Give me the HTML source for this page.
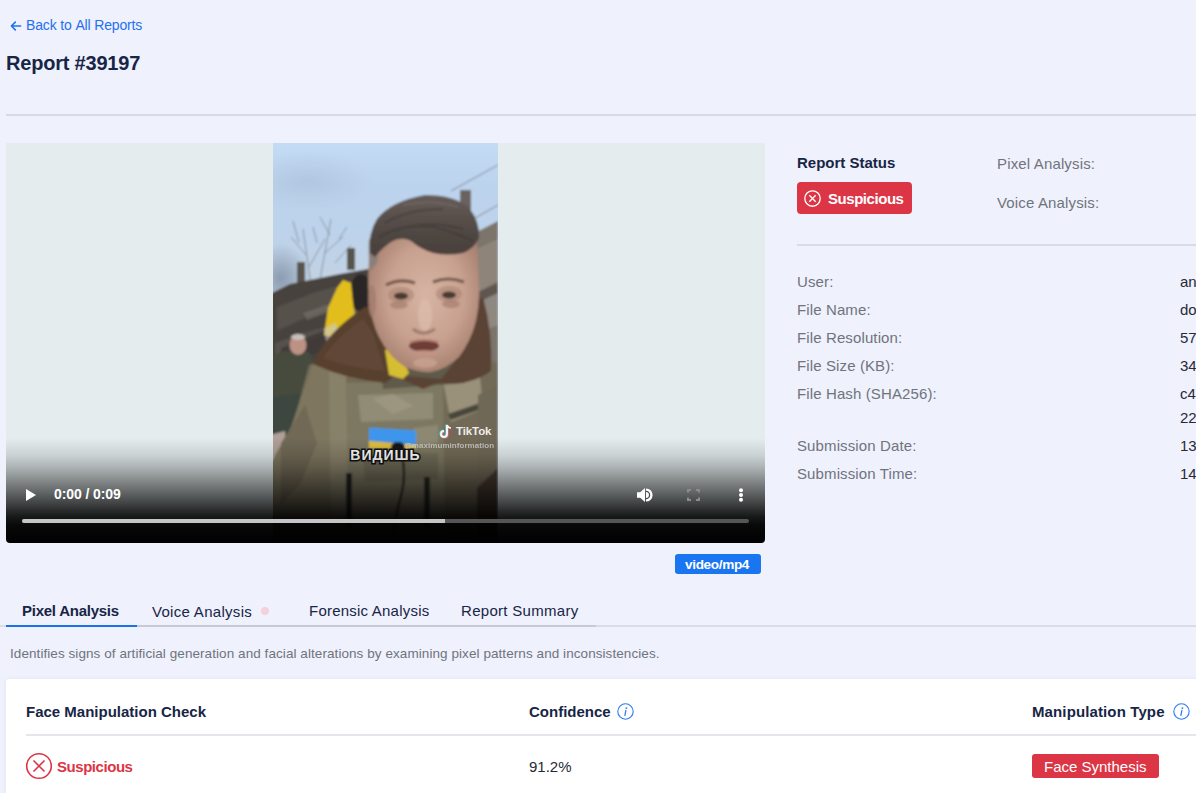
<!DOCTYPE html>
<html><head><meta charset="utf-8">
<style>
html,body{margin:0;padding:0}
body{width:1196px;height:793px;overflow:hidden;position:relative;background:#eff1fc;font-family:"Liberation Sans",sans-serif}
.t{position:absolute;white-space:nowrap;line-height:1}
.navy{color:#172546}
.grey{color:#6f747c;letter-spacing:0.12px}
.dark{color:#262a35}
.b{font-weight:700}
</style></head><body>

<!-- header -->
<div class="t" style="left:10px;top:18px;font-size:14px;color:#1f70f2">
  <svg width="13" height="14" viewBox="0 0 13 14" style="position:absolute;left:0;top:1px"><path d="M10.6 7H1.8M5.3 3.1L1.4 7 5.3 10.9" fill="none" stroke="#1f70f2" stroke-width="1.6" stroke-linecap="round" stroke-linejoin="round"/></svg>
  <span style="position:absolute;left:16px;top:0;letter-spacing:-0.15px">Back&nbsp;to&nbsp;All&nbsp;Reports</span>
</div>
<div class="t navy b" style="left:6px;top:52.8px;font-size:20px;letter-spacing:-0.2px">Report #39197</div>
<div style="position:absolute;left:6px;top:114px;width:1190px;height:2px;background:#d8dae6"></div>

<!-- video -->
<div id="video" style="position:absolute;left:6px;top:143px;width:759px;height:400px;border-radius:0 0 4px 4px;overflow:hidden;background:#e4ecee">
<svg width="225" height="400" viewBox="0 0 225 400" style="position:absolute;left:267px;top:0">
<defs>
<linearGradient id="sky" x1="0" y1="0" x2="0" y2="1">
<stop offset="0" stop-color="#c4dcf6"/><stop offset="0.12" stop-color="#bcd3ee"/><stop offset="0.25" stop-color="#bed3ea"/><stop offset="0.36" stop-color="#c3d2e2"/><stop offset="0.5" stop-color="#b8c4d2"/>
</linearGradient>
<radialGradient id="cloud" cx="0.5" cy="0.5" r="0.5"><stop offset="0" stop-color="#a8bcd4" stop-opacity="0.55"/><stop offset="1" stop-color="#aebcce" stop-opacity="0"/></radialGradient>
<radialGradient id="smoke" cx="0.5" cy="0.5" r="0.5"><stop offset="0" stop-color="#8595ab" stop-opacity="0.9"/><stop offset="1" stop-color="#8595ab" stop-opacity="0"/></radialGradient>
<radialGradient id="faceg" cx="0.52" cy="0.45" r="0.62"><stop offset="0" stop-color="#d6b4a4"/><stop offset="0.55" stop-color="#c8a190"/><stop offset="1" stop-color="#9e7868"/></radialGradient>
<linearGradient id="hairg" x1="0" y1="0" x2="0" y2="1"><stop offset="0" stop-color="#665c58"/><stop offset="0.65" stop-color="#4e4642"/><stop offset="1" stop-color="#4a403c"/></linearGradient>
<filter id="bl" x="-5%" y="-5%" width="110%" height="110%"><feGaussianBlur stdDeviation="1.3"/></filter>
</defs>
<g filter="url(#bl)">
<rect x="-5" y="-5" width="235" height="410" fill="url(#sky)"/>
<ellipse cx="35" cy="38" rx="65" ry="30" fill="url(#cloud)"/>
<ellipse cx="8" cy="135" rx="30" ry="35" fill="url(#smoke)"/>
<!-- trees -->
<g stroke="#5e6a78" stroke-width="0.9" fill="none" opacity="0.7">
<path d="M38 142L30 86M33 112L18 94M36 124L52 96M46 142L58 76M52 110L70 94M57 92L47 74M26 100L20 78M62 120L78 102M44 100L40 84M66 96L74 84"/>
</g>
<!-- poles -->
<rect x="24" y="119" width="8" height="25" fill="#58524c"/>
<rect x="74" y="105" width="8" height="22" fill="#58524c"/>
<rect x="187" y="47" width="11" height="45" fill="#6a625e"/>
<path d="M178 48L225 22M190 82L225 62" stroke="#6a6a72" stroke-width="0.8"/>
<!-- trench wall -->
<path d="M-5 152L17 141L67 131L95 126L122 124L122 280L-5 280Z" fill="#46423e"/>
<path d="M160 160L225 150L225 260L160 260Z" fill="#5a5448"/>
<path d="M4 164L40 150L88 136L98 146L70 160L30 176L4 188Z" fill="#5a5550" opacity="0.8"/>
<path d="M2 200L30 190L60 182L58 190L30 200L2 212Z" fill="#5e5852" opacity="0.7"/>
<path d="M70 170L95 160L98 168L72 178Z" fill="#8a847a" opacity="0.5"/>
<path d="M8 205L50 188L88 172L95 192L50 208L8 222Z" fill="#3e3a38" opacity="0.9"/>
<path d="M30 170L60 160L64 166L34 177Z" fill="#7a746c" opacity="0.6"/>
<!-- right sandbags -->
<path d="M198 92L225 78L225 250L200 250Z" fill="#7c746c"/>
<path d="M203 106L225 96L225 138L203 150Z" fill="#8e847a"/>
<path d="M203 150L225 140L225 160L204 168Z" fill="#5e5650"/>
<path d="M203 160L225 150L225 182L205 190Z" fill="#8e8880"/>
<!-- dark head behind -->
<ellipse cx="88" cy="150" rx="11" ry="19" fill="#2a2826"/>
<!-- yellow jacket -->
<path d="M51 192L55 165L64 145L70 137L78 140L80 160L84 185L72 198Z" fill="#e2be1e"/>
<path d="M51 186L62 180L70 194L53 198Z" fill="#c8ccd0" opacity="0.6"/>
<!-- older man -->
<path d="M-5 214L12 208L36 209L44 228L42 300L-5 305Z" fill="#464b3c"/>
<ellipse cx="25" cy="202" rx="8.5" ry="10" fill="#bb9284"/>
<ellipse cx="25" cy="194" rx="7" ry="3" fill="#c8c0ba"/>
<path d="M-5 255L28 250L38 298L-5 305Z" fill="#3c4640"/>
<path d="M-3 292L12 288L14 312L-3 314Z" fill="#b0a098"/>
<!-- body / vest base -->
<path d="M-5 400L-5 325L20 282L36 222L70 214L140 226L205 214L225 220L225 400Z" fill="#726b57"/>
<!-- left sleeve -->
<path d="M-5 400L-5 325L18 284L40 220L58 226L60 400Z" fill="#7e765f"/>
<path d="M8 300L32 262L44 300L28 340L8 362Z" fill="#6e6654" opacity="0.8"/>
<!-- left strap -->
<path d="M56 228L73 233L77 400L58 400Z" fill="#88816b"/>
<!-- chest plate -->
<path d="M73 240L170 237L172 400L76 400Z" fill="#7d7862"/>
<path d="M85 252L160 250L160 276L88 279Z" fill="#948f7a" opacity="0.85"/>
<path d="M90 312L165 310L165 336L92 339Z" fill="#6e6956" opacity="0.8"/>
<path d="M100 256L120 251L140 263L120 271Z" fill="#a39d88" opacity="0.6"/>
<path d="M140 285L165 282L165 300L142 303Z" fill="#98927c" opacity="0.6"/>
<!-- right strap -->
<path d="M168 228L205 214L210 266L178 279Z" fill="#99917a"/>
<path d="M175 271L210 259L211 265L178 277Z" fill="#4a463a"/>
<!-- right side -->
<path d="M205 252L225 242L225 400L204 400Z" fill="#706856"/>
<path d="M204 345L225 325L225 400L204 400Z" fill="#4a3a30"/>
<!-- dark sticks / cable -->
<rect x="73" y="330" width="6" height="55" fill="#232220"/>
<rect x="151" y="334" width="6" height="50" fill="#262522"/>
<path d="M126 304Q136 330 126 360L119 395" stroke="#141414" stroke-width="2.2" fill="none"/>
<!-- neck -->
<path d="M105 198L150 218L178 198L192 240L110 246Z" fill="#5e5a4a"/>
<!-- fur collar -->
<path d="M40 221Q52 190 92 164L104 168Q116 196 126 230L112 240Q72 236 40 221Z" fill="#58402f"/>
<path d="M50 215Q62 195 90 176L100 190Q106 210 112 228Q80 226 50 215Z" fill="#644a3c" opacity="0.7"/>
<path d="M202 160L210 154Q220 190 218 228Q196 244 164 240Q192 214 202 160Z" fill="#5a4236"/>
<path d="M120 232L168 236L190 230L150 246Z" fill="#5a4236"/>
<!-- yellow collar -->
<path d="M112 207L124 204L136 230L130 236L116 232Z" fill="#d6be30"/>
<!-- face -->
<path d="M97 100Q94 140 96 155Q98 178 106 194Q116 214 132 224Q146 230 158 229Q174 226 186 214Q198 198 203 178Q207 160 206 143L204 96Q150 80 97 100Z" fill="url(#faceg)"/>
<ellipse cx="99" cy="158" rx="4" ry="16" fill="#a47c6e" opacity="0.8"/>
<!-- eyes & brows -->
<ellipse cx="128" cy="152" rx="13" ry="8" fill="#a8806f" opacity="0.55"/>
<ellipse cx="176" cy="151" rx="13" ry="8" fill="#a8806f" opacity="0.55"/>
<path d="M113 142Q127 135 142 140" stroke="#7a5a4e" stroke-width="3.2" fill="none"/>
<path d="M160 139Q175 133 191 139" stroke="#7a5a4e" stroke-width="3.2" fill="none"/>
<ellipse cx="128" cy="153" rx="7" ry="3.4" fill="#4a3a32"/>
<ellipse cx="176" cy="152" rx="7" ry="3.4" fill="#4a3a32"/>
<ellipse cx="126" cy="162" rx="9" ry="4" fill="#a07868" opacity="0.6"/>
<ellipse cx="178" cy="161" rx="9" ry="4" fill="#a07868" opacity="0.6"/>
<!-- nose -->
<ellipse cx="152" cy="172" rx="7" ry="16" fill="#dcbcac" opacity="0.75"/>
<path d="M140 186Q150 194 162 186" stroke="#94705f" stroke-width="3" fill="none" opacity="0.8"/>
<!-- mouth -->
<ellipse cx="151" cy="203" rx="15" ry="5.5" fill="#6e3e38"/>
<path d="M137 199Q151 195 165 199" stroke="#b48070" stroke-width="2" fill="none"/>
<ellipse cx="151" cy="210" rx="12" ry="3" fill="#c49484" opacity="0.8"/>
<ellipse cx="152" cy="220" rx="12" ry="5" fill="#d0aa9a" opacity="0.6"/>
<!-- hair -->
<path d="M96 96Q95 112 97 128L104 120Q106 106 104 94Z" fill="#8c7e78"/>
<path d="M97 110Q95 90 104 76Q118 58 152 52Q182 52 196 65Q207 78 206 95Q201 106 190 110Q175 113 160 110Q147 106 138 98Q128 93 118 99Q108 106 102 114Z" fill="url(#hairg)"/>
<path d="M112 80Q135 66 170 66M106 94Q130 80 160 84Q180 88 200 98M122 88Q150 76 190 86" stroke="#3e3634" stroke-width="2.2" fill="none" opacity="0.55"/>
<path d="M130 62Q160 56 185 64" stroke="#7a706c" stroke-width="2" fill="none" opacity="0.5"/>
<!-- flag -->
<path d="M96 284.5L143 287.5L143 302L96 298Z" fill="#3c96ec"/>
<path d="M96 298L143 302L143 305.5L96 305.5Z" fill="#e0c03a"/>
<ellipse cx="125" cy="304" rx="7" ry="5" fill="#141414"/>
</g>
<!-- overlay text -->
<text x="112.5" y="317" font-family="Liberation Sans" font-weight="700" font-size="14" fill="#fff" stroke="#141414" stroke-width="3.2" paint-order="stroke" text-anchor="middle" letter-spacing="1">ВИДИШЬ</text>
<g transform="translate(167,280)">
<path d="M7 2V11A3 3 0 1 1 4 8" stroke="#f05a80" stroke-width="2.4" fill="none" transform="translate(0.8,0.6)" opacity="0.8"/>
<path d="M7 2V11A3 3 0 1 1 4 8" stroke="#40e0e0" stroke-width="2.4" fill="none" transform="translate(-0.6,-0.4)" opacity="0.8"/>
<path d="M7 2V11A3 3 0 1 1 4 8" stroke="#f4f4f4" stroke-width="2" fill="none"/>
<path d="M7 2Q8 5 11 5" stroke="#f4f4f4" stroke-width="1.6" fill="none"/>
<text x="16" y="12" font-family="Liberation Sans" font-weight="700" font-size="11.5" fill="#ececec" letter-spacing="-0.1">TikTok</text>
</g>
<text x="131" y="304.8" font-family="Liberation Sans" font-weight="700" font-size="8" fill="#dcdcdc" opacity="0.75" letter-spacing="0.05">@maximuminformation</text>
</svg>
<div style="position:absolute;left:0;top:0;width:759px;height:400px;background:linear-gradient(to bottom, rgba(0,0,0,0) 0px, rgba(0,0,0,0) 295px, rgba(0,0,0,0.11) 312px, rgba(0,0,0,0.24) 324px, rgba(0,0,0,0.45) 340px, rgba(0,0,0,0.66) 356px, rgba(0,0,0,0.78) 365px, rgba(0,0,0,0.9) 374px, rgba(0,0,0,0.96) 382px, rgba(0,0,0,1) 400px)"></div>
<svg style="position:absolute;left:0;top:0" width="759" height="400" viewBox="0 0 759 400">
<path d="M20 346L30 352L20 358Z" fill="#fff"/>
<path d="M631 349.3H634.2L639 345V359L634.2 354.7H631Z" fill="#fff"/>
<path d="M640 345.4A6.6 6.6 0 0 1 640 358.6Z" fill="#fff"/>
<path d="M640 348.4A3.6 3.6 0 0 1 640 355.6" stroke="#4a4d4f" stroke-width="1.3" fill="none"/>
<path d="M682 349.5V347H685M690 347H693V349.5M693 354.5V357H690M685 357H682V354.5" stroke="#8c8c8c" stroke-width="2" fill="none"/>
<circle cx="735" cy="347.3" r="2" fill="#fff"/><circle cx="735" cy="352" r="2" fill="#fff"/><circle cx="735" cy="356.8" r="2" fill="#fff"/>
<rect x="16" y="376" width="727" height="4" rx="2" fill="#565656"/>
<rect x="16" y="376" width="423" height="4" rx="2" fill="#c6c6c6"/><rect x="434" y="376" width="5" height="4" fill="#c6c6c6"/>
</svg>
<div style="position:absolute;left:48px;top:344.1px;font-family:'Liberation Sans';font-weight:700;font-size:14px;line-height:14px;color:#fff;white-space:nowrap;letter-spacing:-0.1px">0:00 / 0:09</div>
</div>

<!-- right panel -->
<div class="t navy b" style="left:797px;top:155px;font-size:15px">Report Status</div>
<div style="position:absolute;left:797px;top:182px;width:115px;height:32px;border-radius:4px;background:#dc3545"></div>
<svg style="position:absolute;left:803px;top:189px" width="19" height="19" viewBox="0 0 19 19"><circle cx="9.5" cy="9.5" r="7.7" fill="none" stroke="#fff" stroke-width="1.35"/><path d="M6.3 6.3L12.7 12.7M12.7 6.3L6.3 12.7" stroke="#fff" stroke-width="1.35"/></svg>
<div class="t b" style="left:828px;top:191.3px;font-size:15px;color:#fff;letter-spacing:-0.45px">Suspicious</div>
<div class="t grey" style="left:997px;top:156px;font-size:15px;letter-spacing:0.15px">Pixel Analysis:</div>
<div class="t grey" style="left:997px;top:195px;font-size:15px;letter-spacing:0.15px">Voice Analysis:</div>
<div style="position:absolute;left:797px;top:244px;width:399px;height:2px;background:#d9dce8"></div>

<div class="t grey" style="left:797px;top:274px;font-size:15px">User:</div>
<div class="t grey" style="left:797px;top:302px;font-size:15px">File Name:</div>
<div class="t grey" style="left:797px;top:330px;font-size:15px">File Resolution:</div>
<div class="t grey" style="left:797px;top:358px;font-size:15px">File Size (KB):</div>
<div class="t grey" style="left:797px;top:386px;font-size:15px">File Hash (SHA256):</div>
<div class="t grey" style="left:797px;top:438px;font-size:15px">Submission Date:</div>
<div class="t grey" style="left:797px;top:466px;font-size:15px">Submission Time:</div>

<div class="t dark" style="left:1180px;top:274px;font-size:15px">anonymous</div>
<div class="t dark" style="left:1180px;top:302px;font-size:15px">download.mp4</div>
<div class="t dark" style="left:1180px;top:330px;font-size:15px">576x1024</div>
<div class="t dark" style="left:1180px;top:358px;font-size:15px">3412</div>
<div class="t dark" style="left:1180px;top:386px;font-size:15px">c4a1</div>
<div class="t dark" style="left:1180px;top:410px;font-size:15px">22ab</div>
<div class="t dark" style="left:1180px;top:438px;font-size:15px">13/03</div>
<div class="t dark" style="left:1180px;top:466px;font-size:15px">14:22</div>

<!-- mime badge -->
<div style="position:absolute;left:675px;top:554px;width:86px;height:20px;border-radius:3px;background:#1a75f0"></div>
<div class="t b" style="left:685px;top:557.6px;font-size:13.6px;color:#fff;letter-spacing:-0.35px">video/mp4</div>

<!-- tabs -->
<div style="position:absolute;left:0;top:625px;width:1196px;height:2px;background:#dadce8"></div>
<div style="position:absolute;left:6px;top:625px;width:590px;height:2px;background:#c6c9d7"></div>
<div style="position:absolute;left:6px;top:624.5px;width:130.5px;height:2.5px;background:#1a73e8"></div>
<div class="t navy b" style="left:22px;top:603px;font-size:15px;letter-spacing:-0.25px">Pixel Analysis</div>
<div class="t navy" style="left:152px;top:604px;font-size:15px;letter-spacing:0.3px">Voice Analysis</div>
<div style="position:absolute;left:261px;top:607px;width:8px;height:8px;border-radius:50%;background:#f2d2dc;filter:blur(0.4px)"></div>
<div class="t navy" style="left:309px;top:603px;font-size:15px;letter-spacing:0.22px">Forensic Analysis</div>
<div class="t navy" style="left:461px;top:603px;font-size:15px;letter-spacing:0.3px">Report Summary</div>

<div class="t grey" style="left:10px;top:646.6px;font-size:13.5px;letter-spacing:0.07px">Identifies signs of artificial generation and facial alterations by examining pixel patterns and inconsistencies.</div>

<!-- card -->
<div style="position:absolute;left:6px;top:679px;width:1200px;height:200px;border-radius:3px;background:#fff;box-shadow:0 0 5px rgba(80,90,160,0.07)"></div>
<div class="t navy b" style="left:26px;top:704px;font-size:15px">Face Manipulation Check</div>
<div class="t navy b" style="left:529px;top:704px;font-size:15px">Confidence</div>
<svg style="position:absolute;left:617px;top:703px" width="17" height="17" viewBox="0 0 17 17"><circle cx="8.5" cy="8.5" r="7.7" fill="none" stroke="#2b7bf3" stroke-width="1.1"/><circle cx="9.4" cy="5.1" r="0.95" fill="#2b7bf3"/><path d="M8.9 7.3L7.9 12.4" stroke="#2b7bf3" stroke-width="1.25" stroke-linecap="round"/></svg>
<div class="t navy b" style="left:1032px;top:704px;font-size:15px;letter-spacing:0.12px">Manipulation Type</div>
<svg style="position:absolute;left:1173px;top:703px" width="17" height="17" viewBox="0 0 17 17"><circle cx="8.5" cy="8.5" r="7.7" fill="none" stroke="#2b7bf3" stroke-width="1.1"/><circle cx="9.4" cy="5.1" r="0.95" fill="#2b7bf3"/><path d="M8.9 7.3L7.9 12.4" stroke="#2b7bf3" stroke-width="1.25" stroke-linecap="round"/></svg>
<div style="position:absolute;left:26px;top:734px;width:1170px;height:2px;background:#e4e6ec"></div>

<svg style="position:absolute;left:25px;top:752px" width="28" height="28" viewBox="0 0 28 28"><circle cx="14" cy="14" r="12.3" fill="none" stroke="#dc3545" stroke-width="1.6"/><path d="M8.5 8.5L19.5 19.5M19.5 8.5L8.5 19.5" stroke="#dc3545" stroke-width="1.6"/></svg>
<div class="t b" style="left:57px;top:759px;font-size:15px;color:#dc3545;letter-spacing:-0.45px">Suspicious</div>
<div class="t dark" style="left:529px;top:759px;font-size:15px">91.2%</div>
<div style="position:absolute;left:1032px;top:754px;width:127px;height:24px;border-radius:3px;background:#dc3545"></div>
<div class="t" style="left:1044px;top:759px;font-size:15px;color:#fff">Face Synthesis</div>

</body></html>
